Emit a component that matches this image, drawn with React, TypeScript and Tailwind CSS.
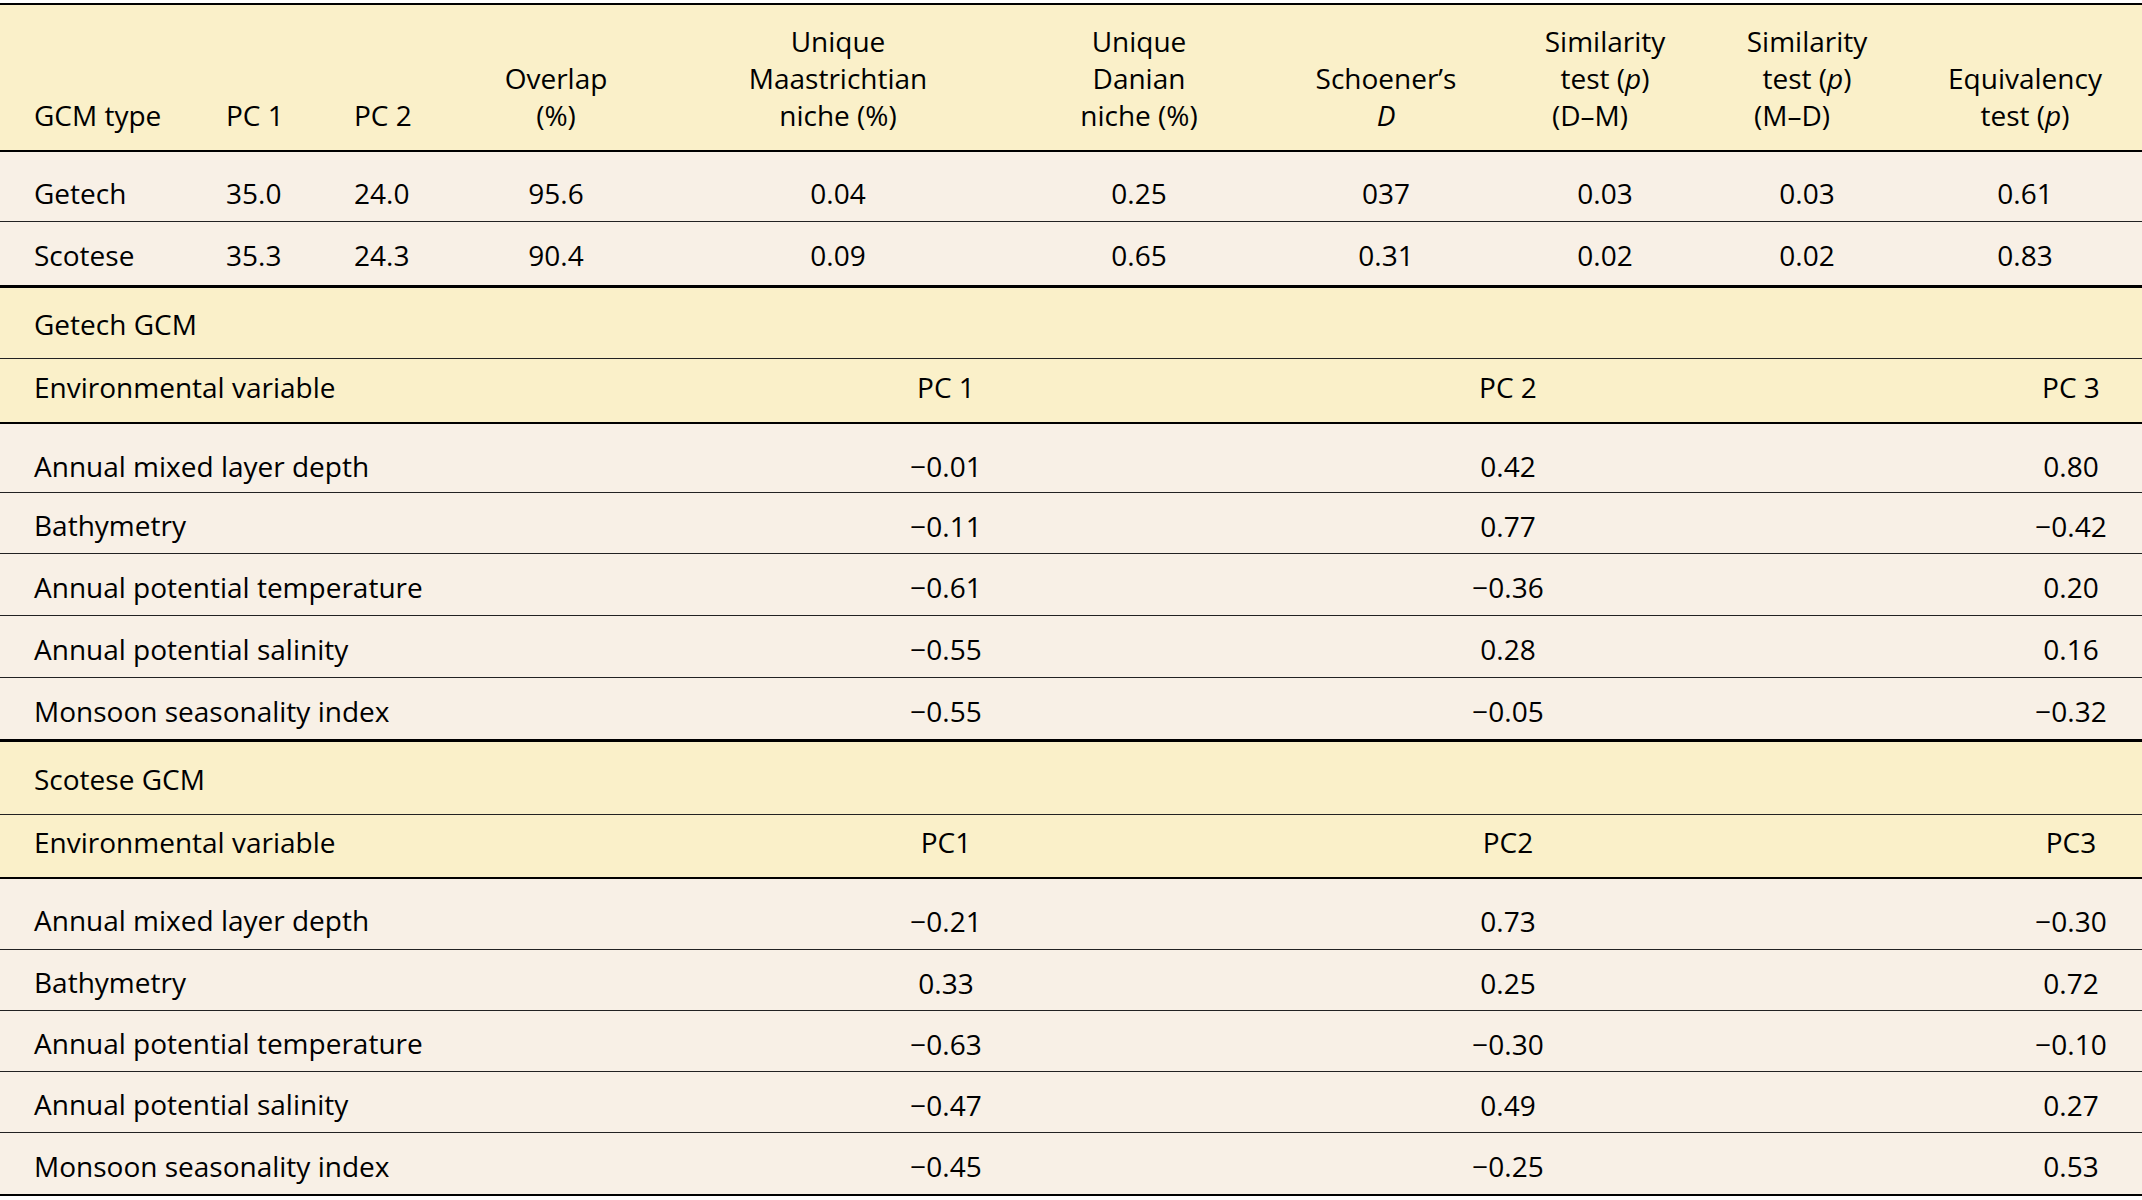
import React from "react";

type Cell = React.ReactNode;

const topHead: { lines: Cell[]; align: "left" | "center"; shift?: boolean }[] = [
  { lines: ["GCM type"], align: "left" },
  { lines: ["PC 1"], align: "left" },
  { lines: ["PC 2"], align: "left" },
  { lines: ["Overlap", "(%)"], align: "center" },
  { lines: ["Unique", "Maastrichtian", "niche (%)"], align: "center" },
  { lines: ["Unique", "Danian", "niche (%)"], align: "center" },
  { lines: ["Schoener’s", <i key="d">D</i>], align: "center" },
  {
    lines: ["Similarity", <span key="t">test (<i>p</i>)</span>, "(D–M)"],
    align: "center",
    shift: true,
  },
  {
    lines: ["Similarity", <span key="t">test (<i>p</i>)</span>, "(M–D)"],
    align: "center",
    shift: true,
  },
  { lines: ["Equivalency", <span key="t">test (<i>p</i>)</span>], align: "center" },
];

const topRows = [
  ["Getech", "35.0", "24.0", "95.6", "0.04", "0.25", "037", "0.03", "0.03", "0.61"],
  ["Scotese", "35.3", "24.3", "90.4", "0.09", "0.65", "0.31", "0.02", "0.02", "0.83"],
];

const vars = [
  "Annual mixed layer depth",
  "Bathymetry",
  "Annual potential temperature",
  "Annual potential salinity",
  "Monsoon seasonality index",
];

const sections = [
  {
    title: "Getech GCM",
    pcs: ["PC 1", "PC 2", "PC 3"],
    values: [
      ["−0.01", "0.42", "0.80"],
      ["−0.11", "0.77", "−0.42"],
      ["−0.61", "−0.36", "0.20"],
      ["−0.55", "0.28", "0.16"],
      ["−0.55", "−0.05", "−0.32"],
    ],
    titleRow: "h-[71px] pt-[2px]",
    envRow: "h-[65px] pb-[7px]",
    rows: [
      "h-[69px] pt-[16px] border-b border-[#222]",
      "h-[61px] pt-[5px] border-b border-[#222]",
      "h-[62px] pt-[5px] border-b border-[#222]",
      "h-[62px] pt-[5px] border-b border-[#222]",
      "h-[64px] pt-[5px] border-b-[3px] border-black",
    ],
  },
  {
    title: "Scotese GCM",
    pcs: ["PC1", "PC2", "PC3"],
    values: [
      ["−0.21", "0.73", "−0.30"],
      ["0.33", "0.25", "0.72"],
      ["−0.63", "−0.30", "−0.10"],
      ["−0.47", "0.49", "0.27"],
      ["−0.45", "−0.25", "0.53"],
    ],
    titleRow: "h-[73px] pt-[1px]",
    envRow: "h-[64px] pb-[8px]",
    rows: [
      "h-[71px] pt-[13px] border-b border-[#222]",
      "h-[61px] pt-[5px] border-b border-[#222]",
      "h-[61px] pt-[5px] border-b border-[#222]",
      "h-[61px] pt-[5px] border-b border-[#222]",
      "h-[63px] pt-[5px] border-b-2 border-black",
    ],
  },
];

const topGrid =
  "grid grid-cols-[226px_128px_106px_192px_372px_230px_264px_174px_230px_206px]";
const pcGrid = "grid grid-cols-[881px_130px_432px_130px_433px_130px]";

function TopTable() {
  return (
    <div className="border-t-2 border-black">
      {/* header */}
      <div className={`${topGrid} h-[147px] bg-[#faf0c9] border-b-2 border-black pb-[16px]`}>
        {topHead.map((h, i) => (
          <div
            key={i}
            className={`flex flex-col justify-end ${
              h.align === "center" ? "items-center text-center" : "items-start"
            } ${i === 0 ? "pl-[34px]" : ""}`}
          >
            {h.lines.map((l, j) => (
              <div
                key={j}
                className={`leading-[37px] whitespace-nowrap ${
                  h.shift && j === 2 ? "pr-[30px]" : ""
                }`}
              >
                {l}
              </div>
            ))}
          </div>
        ))}
      </div>
      {topRows.map((r, ri) => (
        <div
          key={ri}
          className={`${topGrid} items-center bg-[#f8f0e6] ${
            ri === 0
              ? "h-[70px] pt-[13px] border-b border-[#222]"
              : "h-[66px] pt-[3px] border-b-[3px] border-black"
          }`}
        >
          {r.map((v, i) => (
            <div
              key={i}
              className={`leading-[37px] ${i === 0 ? "pl-[34px]" : ""} ${
                i > 2 ? "text-center" : ""
              }`}
            >
              {v}
            </div>
          ))}
        </div>
      ))}
    </div>
  );
}

function PcSection({ s }: { s: (typeof sections)[number] }) {
  return (
    <div>
      <div
        className={`flex items-center pl-[34px] bg-[#faf0c9] border-b border-[#222] ${s.titleRow}`}
      >
        {s.title}
      </div>
      <div
        className={`${pcGrid} items-center bg-[#faf0c9] border-b-2 border-black ${s.envRow}`}
      >
        <div className="pl-[34px] leading-[37px]">Environmental variable</div>
        <div className="text-center">{s.pcs[0]}</div>
        <div />
        <div className="text-center">{s.pcs[1]}</div>
        <div />
        <div className="text-center">{s.pcs[2]}</div>
      </div>
      {vars.map((name, vi) => (
        <div key={vi} className={`${pcGrid} items-center bg-[#f8f0e6] ${s.rows[vi]}`}>
          <div className="pl-[34px] leading-[37px]">{name}</div>
          <div className="text-center whitespace-nowrap">{s.values[vi][0]}</div>
          <div />
          <div className="text-center whitespace-nowrap">{s.values[vi][1]}</div>
          <div />
          <div className="text-center whitespace-nowrap">{s.values[vi][2]}</div>
        </div>
      ))}
    </div>
  );
}

export default function App() {
  return (
    <div className="w-[2142px] h-[1200px] bg-white pt-[3px] overflow-hidden font-['Open_Sans',sans-serif] text-[28px] text-black">
      <TopTable />
      {sections.map((s) => (
        <PcSection key={s.title} s={s} />
      ))}
    </div>
  );
}
